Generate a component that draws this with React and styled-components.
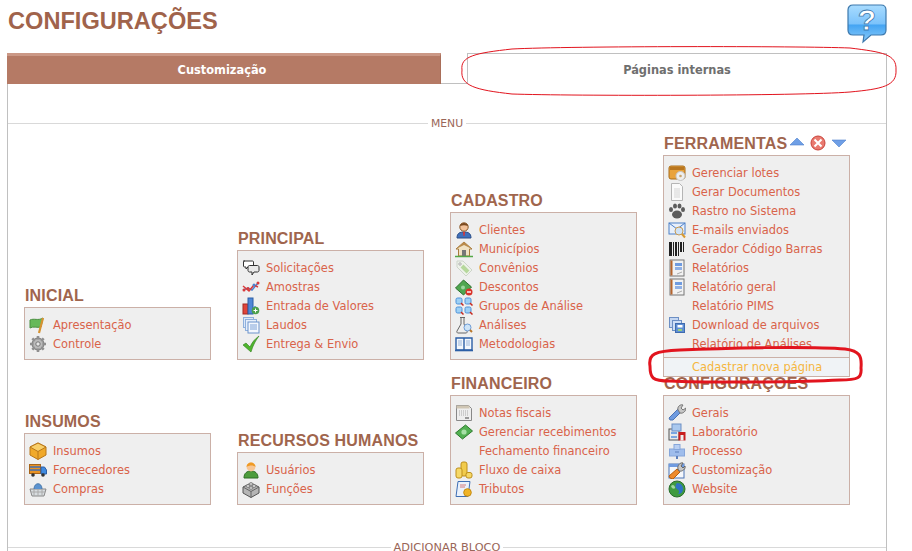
import React from 'react';
import styled, { createGlobalStyle } from 'styled-components';

const Global = createGlobalStyle`
  html, body { margin: 0; padding: 0; background: #fff; height: 551px; overflow: hidden; }
  body { font-family: "DejaVu Sans", Tahoma, sans-serif; }
`;
const Page = styled.div`position: relative; width: 912px; height: 551px; overflow: hidden; padding: 0 25px 0 7px; box-sizing: border-box;`;
const Header = styled.header`display: flex; justify-content: space-between; height: 53px;`;
const Title = styled.h1`margin: 8px 0 0 1px; font: bold 23.6px/26px "Liberation Sans", Arial, sans-serif; color: #a0634b;`;
const HelpBtn = styled.svg`width: 40px; height: 40px; margin-top: 4px; flex: none;`;
const Tabs = styled.nav`display: flex; height: 31px;`;
const ActiveTab = styled.div`
  width: 434px; box-sizing: border-box; background: #b57a65; border-top: 3px solid #cb9886; border-right: 1px solid #a96e59; padding-right: 3px;
  color: #fff; font: bold 11.4px/29px "DejaVu Sans", sans-serif; text-align: center;
`;
const TabGap = styled.div`width: 26px; border-bottom: 1px solid #c0c0c0;`;
const InactiveTab = styled.div`
  flex: 1; box-sizing: border-box; border: 1px solid #c0c0c0; border-bottom: 0; color: #6f6f6f;
  font: bold 11.4px/33px "DejaVu Sans", sans-serif; text-align: center;
`;
const Panel = styled.main`border: 1px solid #c0c0c0; border-width: 0 1px; height: 480px; padding-top: 31px; box-sizing: border-box;`;
const Divider = styled.div`display: flex; align-items: center; height: 16px; gap: 3px; color: #9a6658; font-size: ${p => p.$size}px; white-space: nowrap;
  &::before, &::after { content: ""; flex: 1; height: 1px; background: #d9d9d9; }
`;
const Grid = styled.div`
  display: grid; grid-template-columns: repeat(4, 187px); column-gap: 26px; row-gap: 15px; padding: 3px 0 0 16px; align-items: end; height: 373px; box-sizing: border-box; grid-template-rows: 226px 130px; margin-bottom: 35px;
`;
const Block = styled.section`position: relative;`;
const BlockHead = styled.div`display: flex; align-items: center; height: 21px; padding: 0 0 2px 1px; box-sizing: border-box;`;
const BlockTitle = styled.h2`margin: 0; font: bold 16px/19px "Liberation Sans", Arial, sans-serif; letter-spacing: .16px; color: #a0654d;`;
const Tools = styled.svg`width: 60px; height: 18px; margin-left: 1px; margin-top: -2px;`;
const Box = styled.ul`list-style: none; margin: 0; padding: 7px 0 6px 4px; border: 1px solid #cbb0a7; background: #efefef;`;
const Row = styled.li`display: flex; align-items: center; height: 19px; color: #d9634a; font-size: 11.45px; white-space: nowrap; gap: 6px;`;
const IconSlot = styled.span`width: 18px; height: 18px; flex: none; display: block; svg { display: block; width: 18px; height: 18px; }`;
const HoverRow = styled.div`
  position: absolute; left: 0; right: 0; top: 223px; height: 20px; box-sizing: border-box; padding-left: 28px; border: 1px solid #cbb0a7;
  background: #f0f3f6; color: #f5b63f; font-size: 11.45px; line-height: 18px; z-index: 2; white-space: nowrap;
`;
const Marks = styled.svg`position: absolute; left: 0; top: 0; width: 912px; height: 551px; z-index: 3; pointer-events: none;`;

const S = ({ children }) => <svg viewBox="0 0 18 18">{children}</svg>;
const blueDoc = (x, y, f = '#dbe8fa') => <rect x={x} y={y} width="9" height="10" fill={f} stroke="#6d8fc4" />;
const notebook = <S><rect x="2" y="1" width="14" height="16" fill="#f2f2f2" stroke="#777" /><rect x="2.5" y="1.5" width="2" height="15" fill="#b5652e" /><rect x="7" y="4" width="7" height="3" fill="#6f9be0" /><rect x="7" y="8" width="7" height="3" fill="#8fb0e6" /><path d="M9 15l5-2" stroke="#aaa" /></S>;

const I = {
  lotes: <S><rect x="1" y="2" width="16" height="13" rx="2" fill="#e9a33c" stroke="#a86d1d" /><rect x="2" y="3" width="14" height="3" fill="#b9761f" /><circle cx="12.5" cy="12" r="4.500" fill="#eee" stroke="#c4c4c4" /><circle cx="12.500" cy="12" r="1.300" fill="#c9a46c" /></S>,
  doc: <S><path d="M3.5 .5h8l3 3v14h-11z" fill="#fafafa" stroke="#b5b5b5" /><path d="M6 6h6M6 8h6M6 10h6M6 12h6M6 14h6" stroke="#d5d5d5" /></S>,
  paw: <S><g fill="#5c5c5c"><ellipse cx="9" cy="12.5" rx="5" ry="4" /><ellipse cx="3" cy="7.5" rx="2" ry="2.5" /><ellipse cx="7" cy="4" rx="2" ry="2.5" /><ellipse cx="11.5" cy="4" rx="2" ry="2.5" /><ellipse cx="15" cy="7.5" rx="2" ry="2.5" /></g></S>,
  mail: <S><rect x="1" y="2" width="16" height="11" fill="#e7effb" stroke="#4d80c8" /><path d="M1 2l8 6 8-6" fill="none" stroke="#4d80c8" /><circle cx="11" cy="10" r="4" fill="#cfe2f7" stroke="#c79a50" /><path d="M14 13l3 3.5" stroke="#d99a30" strokeWidth="2" /></S>,
  barcode: <S><path d="M1 2h3v14H1zM5 2h1v14H5zM7 2h2v14H7zM10 2h1v14h-1zM12 2h2v10h-2zM15 2h1v10h-1z" fill="#222" /></S>,
  report: notebook,
  files: <S>{blueDoc(1.5, 1.5, '#c5d7f2')}{blueDoc(4.5, 4.5, '#cfdff6')}<rect x="7.5" y="7.5" width="9" height="9" fill="#5f8fd4" stroke="#3f6bae" /><rect x="9.5" y="9" width="5" height="2.5" fill="#fff" /><rect x="10" y="13" width="4" height="2" fill="#9bd07a" /></S>,
  wrench: <S><path d="M2 16l-1-2L10 5l3 3-8 8z" fill="#6f9be0" stroke="#4d74b5" /><path d="M10 6c-1-3 2-6 5-5l-2 3 2 2 3-2c0 3-3 6-6 5z" fill="#c7c7c7" stroke="#777" /></S>,
  lab: <S><rect x="1" y="6" width="10" height="11" fill="#e9e9e9" stroke="#555" /><rect x="4" y="1" width="9" height="7" fill="#a9c8ee" stroke="#6d8fc4" /><path d="M3 9h6v2H3zM3 13h6v2H3z" fill="#7aa6e0" /><rect x="10.5" y="9" width="7" height="8.5" fill="#c81e1e" /><rect x="12.5" y="12" width="3" height="5.5" fill="#eee" /></S>,
  process: <S><rect x="1.5" y="7" width="15" height="7" fill="#9fbdec" stroke="#86a6da" /><rect x="6" y="2.5" width="6" height="5" fill="#b9cff2" stroke="#86a6da" /><path d="M9 14v3" stroke="#5d7fbb" strokeWidth="2" /><path d="M7 10h4" stroke="#5d7fbb" /></S>,
  custom: <S><rect x="1" y="3" width="15" height="14" fill="#f5f7fb" stroke="#4d74b5" /><rect x="1" y="3" width="15" height="3" fill="#6f9be0" /><path d="M2 17l-1-2 8-7 3 3-7 7z" fill="#ee8a2c" stroke="#b95f10" /><path d="M10 8c-1-3 2-7 5-6l-2 3 2 2 2-2c1 3-3 6-6 5z" fill="#c7c7c7" stroke="#666" /></S>,
  globe: <S><circle cx="9" cy="9" r="8" fill="#3f9a3f" stroke="#2b6e2b" /><path d="M9 3c4 0 6 3 6 6s-2 5-5 5c2-2 1-4-1-5S7 5 9 3z" fill="#2f72c4" /><path d="M3 6c2-2 3-1 4 1S4 10 3 6z" fill="#9fd89f" /></S>,
  client: <S><path d="M2 17c0-5 3-6 7-6s7 1 7 6z" fill="#3f70bb" stroke="#2c4f88" /><circle cx="9" cy="6" r="4.2" fill="#f2c29a" stroke="#8a5a2a" /><path d="M5 5c0-4 8-4 8 0-3-1-5-1-8 0z" fill="#7a4a20" /><path d="M8 11h2l-.5 4h-1z" fill="#d33" /></S>,
  house: <S><path d="M1 9l8-7 8 7h-2.5v7h-11V9z" fill="#f0e2c4" stroke="#a77b3c" /><path d="M1 9l8-7 8 7-8-4z" fill="#b98a4b" /><rect x="7" y="10" width="4" height="6" fill="#777" /><path d="M0 16.5h18" stroke="#54a848" strokeWidth="1.5" /></S>,
  tag: <S><path d="M2 2h6l9 9-6 6-9-9z" fill="#eef2ea" stroke="#cdd4c9" /><path d="M7 7l6 6" stroke="#b6d89c" strokeWidth="4" /><circle cx="5" cy="5" r="1.2" fill="#fff" stroke="#aaa" /></S>,
  discount: <S><path d="M0.500 10l8-8 8 7-8 8z" fill="#4fa64f" stroke="#2c702c" /><circle cx="8" cy="9.5" r="2" fill="#9cd69c" /><circle cx="14" cy="14" r="3.500" fill="#d9332a" /><path d="M12 14h4" stroke="#fff" strokeWidth="1.4" /></S>,
  groups: <S>{[[1, 1], [10, 1], [1, 10], [10, 10]].map(([x, y]) => <g key={x * 100 + y}><rect x={x} y={y} width="6" height="6" rx="1.5" fill="#9ed0f5" stroke="#4d90d8" /><path d={`M${x + 5} ${y + 5}l2.5 2.5`} stroke="#c8281e" strokeWidth="1.5" /></g>)}</S>,
  flask: <S><path d="M5 1.5h5M6 2v6l-4 7c-.5 1 0 2 1 2h8c1 0 1.5-1 1-2L9 8V2" fill="#eee" stroke="#666" /><circle cx="12.5" cy="11.5" r="3.5" fill="#cde4f8" stroke="#6d9bd6" /><path d="M15 14l2 2" stroke="#b9772a" strokeWidth="2" /></S>,
  book: <S><path d="M1 3h8v12H1zM9 3h8v12H9z" fill="#f3f7fc" stroke="#2c5fa6" strokeWidth="1.4" /><path d="M3 6h4M3 8h4M3 10h4M11 6h4M11 8h4M11 10h4" stroke="#9ab5da" /><path d="M0 15.5h18" stroke="#2c5fa6" strokeWidth="1.6" /></S>,
  notes: <S><path d="M1.5 1.5h12l3 3v12h-15z" fill="#eee" stroke="#888" /><rect x="1.5" y="1.5" width="13" height="3" fill="#cfc6b4" /><path d="M4 7h10M4 9h10M4 11h10" stroke="#aaa" strokeDasharray="1 1" /><rect x="10" y="13" width="4" height="2" fill="#999" /></S>,
  money: <S><path d="M0.500 10l10-8 7 6-10 8z" fill="#52b052" stroke="#2c7a2c" /><circle cx="9" cy="9" r="2.600" fill="#a7e0a7" /></S>,
  coins: <S><rect x="6" y="1" width="6" height="14" rx="2" fill="#f1cb4c" stroke="#bd8f1a" /><rect x="1" y="7" width="6" height="10" rx="2" fill="#f6d866" stroke="#bd8f1a" /><rect x="11" y="11.5" width="6" height="5.5" rx="2" fill="#f6d866" stroke="#bd8f1a" /></S>,
  tax: <S><path d="M3 1.5h12l-2 15H1z" fill="#eaf1fb" stroke="#3f6fb5" /><path d="M5 5h6M5 7h5" stroke="#d67a7a" /><circle cx="12.5" cy="12.5" r="3.8" fill="#f0b428" stroke="#c58a10" /></S>,
  chat: <S><path d="M1.5 2h9c.6 0 1 .4 1 1v4c0 .6-.4 1-1 1H6l-2 2V8H2.500c-.6 0-1-.4-1-1V3c0-.6.4-1 1-1z" fill="#fff" stroke="#333" /><path d="M7.500 6.500h8c.8 0 1.500.6 1.500 1.500v3.500c0 .8-.7 1.500-1.500 1.500H12l-2 3v-3H7.500C6.700 13 6 12.300 6 11.500V8c0-.9.700-1.500 1.500-1.500z" fill="#e9e9e9" stroke="#333" /></S>,
  line: <S><path d="M1 12l5-2 4 2 6-7" fill="none" stroke="#4a82d0" strokeWidth="1.5" /><path d="M1 8l6 5 5-6 4 2" fill="none" stroke="#d93a3a" strokeWidth="1.5" /><circle cx="6" cy="10.500" r="1.500" fill="#d93a3a" /><circle cx="12" cy="7" r="1.500" fill="#4a82d0" /><circle cx="2" cy="12" r="1.500" fill="#d93a3a" /><circle cx="16" cy="5" r="1.500" fill="#d93a3a" /></S>,
  bars: <S><rect x="1" y="7" width="5" height="10" fill="#e0443a" stroke="#a52820" /><rect x="6" y="1" width="5" height="16" fill="#4f86d6" stroke="#2c5fa6" /><rect x="11" y="9" width="3" height="8" fill="#7aa6e0" /><circle cx="13.500" cy="13.500" r="3.800" fill="#4da04d" /><path d="M11.500 13.500h4M13.500 11.500v4" stroke="#fff" /></S>,
  laudos: <S><rect x="1.500" y="1.500" width="10" height="10" fill="#dbe7f8" stroke="#8fb0dc" /><rect x="3.500" y="3.500" width="11" height="11" fill="#e6effb" stroke="#8fb0dc" /><rect x="6" y="6" width="11" height="11" fill="#f3f7fd" stroke="#6d93cb" /><path d="M8 9h7M8 11h7M8 13h7" stroke="#7ea3d8" /></S>,
  check: <S><path d="M1 10l3-2 4 4c2-5 5-8 9-11-3 4-6 9-8 16z" fill="#4eb52e" stroke="#2d7d18" strokeWidth=".6" /></S>,
  user: <S><path d="M2 17c0-5 3-7 7-7s7 2 7 7z" fill="#4d9c3d" stroke="#2f6e25" /><circle cx="9" cy="6" r="4.400" fill="#f7c694" /><path d="M4.500 6c0-6 9-6 9 0-2-2-6-2-9 0z" fill="#ef9a24" /></S>,
  lego: <S><path d="M9 3l8 4v6l-8 4.500L1 13V7z" fill="#b5b5b5" stroke="#555" /><path d="M1 7l8 4.500L17 7M9 11.500v6" fill="none" stroke="#666" /><ellipse cx="6" cy="6" rx="2" ry="1.300" fill="#eee" stroke="#777" /><ellipse cx="12" cy="6" rx="2" ry="1.300" fill="#eee" stroke="#777" /><ellipse cx="9" cy="4" rx="2" ry="1.200" fill="#eee" stroke="#777" /><ellipse cx="9" cy="8" rx="2" ry="1.200" fill="#eee" stroke="#777" /></S>,
  flag: <S><path d="M1 4c4-2 8 1 13-2l-2 9c-4 1-8-1-11 1z" fill="#67b95a" stroke="#4a8f40" /><path d="M14 2L10 17" stroke="#d69232" strokeWidth="2.200" /></S>,
  gear: <S><circle cx="9" cy="9" r="6" fill="#a3a3a3" stroke="#777" /><path d="M9 1v16M1 9h16M3.300 3.300l11.400 11.400M14.700 3.300L3.300 14.700" stroke="#8f8f8f" strokeWidth="2.600" /><circle cx="9" cy="9" r="4.500" fill="#bbb" /><circle cx="9" cy="9" r="2.200" fill="#e6e6e6" stroke="#777" /></S>,
  cube: <S><path d="M9 1l8 4v8l-8 4.500L1 13V5z" fill="#f0a92a" stroke="#b8761a" /><path d="M1 5l8 4.500L17 5 9 1z" fill="#f8cf6a" stroke="#b8761a" /><path d="M9 9.500v8" stroke="#b8761a" /></S>,
  truck: <S><rect x="0.500" y="3.500" width="11" height="9" fill="#e89224" stroke="#a8641a" /><path d="M1 6h10M1 9h10" stroke="#3f6fb5" strokeWidth="1.300" /><path d="M12 6h3.500l2 3v4H12z" fill="#3f8ae0" stroke="#2c5fa6" /><circle cx="4" cy="14" r="1.800" fill="#333" /><circle cx="14" cy="14" r="1.800" fill="#333" /></S>,
  basket: <S><path d="M1 9h16l-2 7H3z" fill="#d8dde0" stroke="#888" /><path d="M5 9v7M9 9v7M13 9v7M2 12h14" stroke="#aaa" /><path d="M5 9c0-7 8-7 8 0" fill="#5b93d0" stroke="#4a79aa" /></S>,
};

const columns = [
  [
    { title: 'INICIAL', items: [['flag', 'Apresentação'], ['gear', 'Controle']] },
    { title: 'INSUMOS', items: [['cube', 'Insumos'], ['truck', 'Fornecedores'], ['basket', 'Compras']] },
  ],
  [
    { title: 'PRINCIPAL', items: [['chat', 'Solicitações'], ['line', 'Amostras'], ['bars', 'Entrada de Valores'], ['laudos', 'Laudos'], ['check', 'Entrega & Envio']] },
    { title: 'RECURSOS HUMANOS', items: [['user', 'Usuários'], ['lego', 'Funções']] },
  ],
  [
    { title: 'CADASTRO', items: [['client', 'Clientes'], ['house', 'Municípios'], ['tag', 'Convênios'], ['discount', 'Descontos'], ['groups', 'Grupos de Análise'], ['flask', 'Análises'], ['book', 'Metodologias']] },
    { title: 'FINANCEIRO', items: [['notes', 'Notas fiscais'], ['money', 'Gerenciar recebimentos'], [null, 'Fechamento financeiro'], ['coins', 'Fluxo de caixa'], ['tax', 'Tributos']] },
  ],
  [
    { title: 'FERRAMENTAS', tools: true, hover: 'Cadastrar nova página', items: [['lotes', 'Gerenciar lotes'], ['doc', 'Gerar Documentos'], ['paw', 'Rastro no Sistema'], ['mail', 'E-mails enviados'], ['barcode', 'Gerador Código Barras'], ['report', 'Relatórios'], ['report', 'Relatório geral'], [null, 'Relatório PIMS'], ['files', 'Download de arquivos'], [null, 'Relatório de Análises']] },
    { title: 'CONFIGURAÇÕES', items: [['wrench', 'Gerais'], ['lab', 'Laboratório'], ['process', 'Processo'], ['custom', 'Customização'], ['globe', 'Website']] },
  ],
];

const Cell = ({ title, items, tools, hover }) => (
  <Block>
    <BlockHead>
      <BlockTitle>{title}</BlockTitle>
      {tools && (
        <Tools viewBox="0 0 60 18">
          <path d="M2 11L9 4l7 7z" fill="#6f9fe6" stroke="#4d7fcc" strokeWidth=".6" />
          <circle cx="30" cy="9" r="7" fill="#e97a70" stroke="#c9423a" />
          <path d="M26.500 5.500l7 7M33.500 5.500l-7 7" stroke="#fff" strokeWidth="2" />
          <path d="M44 6l7 7 7-7z" fill="#6f9fe6" stroke="#4d7fcc" strokeWidth=".6" />
        </Tools>
      )}
    </BlockHead>
    <Box>
      {items.map(([icon, label]) => (
        <Row key={label}>
          <IconSlot>{icon && I[icon]}</IconSlot>
          {label}
        </Row>
      ))}
    </Box>
    {hover && <HoverRow>{hover}</HoverRow>}
  </Block>
);

export default function App() {
  return (
    <Page>
      <Global />
      <Header>
        <Title>CONFIGURAÇÕES</Title>
        <HelpBtn viewBox="0 0 40 40">
          <defs>
            <linearGradient id="hb" x1="0" x2="0" y1="0" y2="1">
              <stop offset="0" stopColor="#a9dcff" />
              <stop offset=".5" stopColor="#7cc3fb" />
              <stop offset=".55" stopColor="#45a5f3" />
              <stop offset="1" stopColor="#8cccf9" />
            </linearGradient>
          </defs>
          <path d="M6 1h28c3 0 5 2 5 5v20c0 3-2 5-5 5H24l-8 7 1-7H6c-3 0-5-2-5-5V6c0-3 2-5 5-5z" fill="url(#hb)" stroke="#3d79ad" strokeWidth="1.200" />
          <text x="20" y="26" textAnchor="middle" fontFamily="Liberation Sans" fontWeight="bold" fontSize="30" fill="#fff" stroke="#3d79ad" strokeWidth=".8">?</text>
        </HelpBtn>
      </Header>
      <Tabs>
        <ActiveTab>Customização</ActiveTab>
        <TabGap />
        <InactiveTab>Páginas internas</InactiveTab>
      </Tabs>
      <Panel>
        <Divider $size={10.8}>MENU</Divider>
        <Grid>
          {[0, 1].flatMap(r => columns.map((c, i) => <Cell key={`${r}-${i}`} {...c[r]} />))}
        </Grid>
        <Divider $size={11.3}>ADICIONAR BLOCO</Divider>
      </Panel>
      <Marks viewBox="0 0 912 551" fill="none">
        <path d="M462 70C460 56 476 53 512 49C570 46 800 46 850 48C882 52 897 54 896 70C897 86 882 89 850 92C800 96 570 96 512 94C476 90 460 86 462 70Z" stroke="#e2141e" strokeWidth="1" />
        <path d="M650 366C648 354 655 351 680 350C720 348 810 346 845 349C860 351 862 356 861 368C862 378 858 380 840 380C800 382 710 383 670 381C652 381 650 378 650 366Z" stroke="#e2141e" strokeWidth="3" />
      </Marks>
    </Page>
  );
}
